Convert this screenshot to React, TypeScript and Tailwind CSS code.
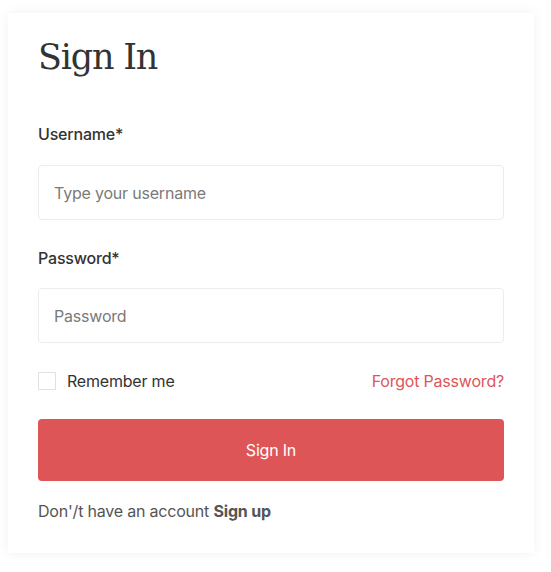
export default function App() {
  return (
    <div className="min-h-screen bg-white pt-[13px] pl-[8px]" style={{ fontFamily: "Inter, 'Noto Sans', sans-serif" }}>
      <div className="w-[526px] bg-white px-[30px] pt-[22px] pb-[30px] tracking-[-0.2px] shadow-[0_0_12px_rgba(0,0,0,0.06)]">
        <h1 className="text-[35px] leading-[44px] tracking-[-1.2px] text-[#333]" style={{ fontFamily: "'DejaVu Serif', serif" }}>
          Sign In
        </h1>

        <form className="mt-[43px]" onSubmit={(e) => e.preventDefault()}>
          <label className="block text-[16px] leading-[24px] font-medium text-[#333]">Username*</label>
          <input
            type="text"
            placeholder="Type your username"
            className="mt-[19px] block h-[55px] w-full rounded-[4px] border border-[#ececec] px-[15px] text-[16px] text-[#333] outline-none placeholder:text-[#7a7a7a]"
          />

          <label className="mt-[26px] block text-[16px] leading-[24px] font-medium text-[#333]">Password*</label>
          <input
            type="password"
            placeholder="Password"
            className="mt-[18px] block h-[55px] w-full rounded-[4px] border border-[#ececec] px-[15px] text-[16px] text-[#333] outline-none placeholder:text-[#7a7a7a]"
          />

          <div className="mt-[26px] flex items-center justify-between">
            <label className="flex items-center gap-[11px] text-[16px] leading-[24px] text-[#333]">
              <span className="block h-[18px] w-[18px] border border-[#e2e2e2] bg-white" />
              Remember me
            </label>
            <a href="#" className="text-[16px] leading-[24px] text-[#de5558]">Forgot Password?</a>
          </div>

          <button
            type="submit"
            className="mt-[26px] block h-[62px] w-full rounded-[4px] bg-[#de5558] text-[16px] text-white"
          >
            Sign In
          </button>

          <p className="mt-[18px] text-[16px] leading-[24px] text-[#555]">
            Don'/t have an account <a href="#" className="font-bold text-[#555]">Sign up</a>
          </p>
        </form>
      </div>
    </div>
  );
}
